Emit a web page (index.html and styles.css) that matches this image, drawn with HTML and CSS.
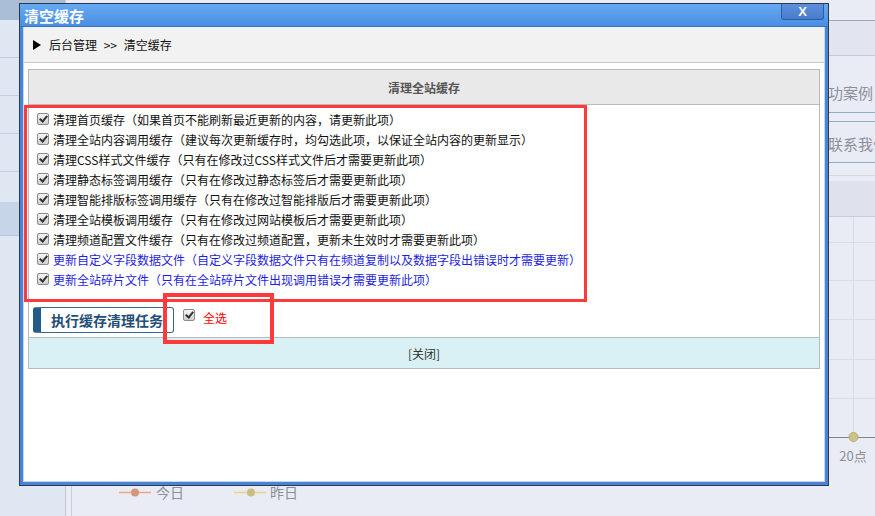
FILE: index.html
```html
<!DOCTYPE html>
<html lang="zh-CN">
<head>
    <meta charset="UTF-8">
    <title>清空缓存</title>
    <link rel="stylesheet" href="styles.css">
</head>
<body>
    <div class="page">
        <aside class="side">
            <div class="side-top"></div>
            <ul class="side-menu">
                <li></li>
                <li></li>
                <li></li>
                <li></li>
                <li class="gap"></li>
                <li class="on"></li>
            </ul>
        </aside>
        <main class="main">
            <div class="main-top"></div>
            <div class="main-band"></div>
            <div class="quick">成功案例</div>
            <div class="quick quick-alt">联系我们</div>
            <div class="chart-wrap">
                <svg class="chart" width="809" height="335" viewBox="0 0 809 335">
                    <rect x="0" y="0" width="809" height="35" fill="#dfe2ec"/>
                    <line x1="0" y1="35.5" x2="809" y2="35.5" stroke="#c8ccd8"/>
                    <line x1="5.5" y1="36" x2="5.5" y2="335" stroke="#c9cdd8"/>
                    <line x1="6" y1="61.5" x2="809" y2="61.5" stroke="#d9dce6"/>
                    <line x1="6" y1="99.5" x2="809" y2="99.5" stroke="#d9dce6"/>
                    <line x1="6" y1="138.5" x2="809" y2="138.5" stroke="#d9dce6"/>
                    <line x1="6" y1="178.5" x2="809" y2="178.5" stroke="#d9dce6"/>
                    <line x1="6" y1="217.5" x2="809" y2="217.5" stroke="#d9dce6"/>
                    <line x1="787.5" y1="36" x2="787.5" y2="262" stroke="#d9dce6"/>
                    <line x1="6" y1="256.5" x2="809" y2="256.5" stroke="#7c8492"/>
                    <circle cx="787.5" cy="256" r="4.5" fill="#cdc38a" stroke="#b9ae72"/>
                    <text x="787" y="280" text-anchor="middle" class="chart-label">20点</text>
                    <line x1="53" y1="311.5" x2="85" y2="311.5" stroke="#f2a584" stroke-width="1.5"/>
                    <circle cx="69" cy="311.5" r="4" fill="#d3967c"/>
                    <text x="90" y="316.5" class="chart-legend">今日</text>
                    <line x1="168" y1="311.5" x2="200" y2="311.5" stroke="#ead77a" stroke-width="1.5"/>
                    <circle cx="185" cy="311.5" r="4" fill="#c8c080"/>
                    <text x="204" y="316.5" class="chart-legend">昨日</text>
                </svg>
            </div>
        </main>
    </div>

    <div class="dialog">
        <div class="dialog-title">
            <span class="dialog-name">清空缓存</span>
            <a class="dialog-close" href="#">X</a>
        </div>
        <div class="dialog-body">
            <div class="crumb">
                <span class="crumb-arrow"></span>
                <span class="crumb-text">后台管理 &gt;&gt; 清空缓存</span>
            </div>
            <table class="grid">
                <tr>
                    <th>清理全站缓存</th>
                </tr>
                <tr>
                    <td class="grid-body">
                        <ul class="cache-list">
                            <li><input type="checkbox" checked>清理首页缓存（如果首页不能刷新最近更新的内容，请更新此项）</li>
                            <li><input type="checkbox" checked>清理全站内容调用缓存（建议每次更新缓存时，均勾选此项，以保证全站内容的更新显示）</li>
                            <li><input type="checkbox" checked>清理CSS样式文件缓存（只有在修改过CSS样式文件后才需要更新此项）</li>
                            <li><input type="checkbox" checked>清理静态标签调用缓存（只有在修改过静态标签后才需要更新此项）</li>
                            <li><input type="checkbox" checked>清理智能排版标签调用缓存（只有在修改过智能排版后才需要更新此项）</li>
                            <li><input type="checkbox" checked>清理全站模板调用缓存（只有在修改过网站模板后才需要更新此项）</li>
                            <li><input type="checkbox" checked>清理频道配置文件缓存（只有在修改过频道配置，更新未生效时才需要更新此项）</li>
                            <li class="blue"><input type="checkbox" checked>更新自定义字段数据文件（自定义字段数据文件只有在频道复制以及数据字段出错误时才需要更新）</li>
                            <li class="blue"><input type="checkbox" checked>更新全站碎片文件（只有在全站碎片文件出现调用错误才需要更新此项）</li>
                        </ul>
                        <div class="actions">
                            <button type="button" class="run-btn">执行缓存清理任务</button>
                            <label class="check-all"><input type="checkbox" checked>全选</label>
                        </div>
                    </td>
                </tr>
                <tr>
                    <td class="grid-foot">[关闭]</td>
                </tr>
            </table>
        </div>
    </div>

    <div class="mark mark-list"></div>
    <div class="mark mark-all"></div>
</body>
</html>
```

FILE: styles.css
```css
body {
    margin: 0;
    padding: 0;
    width: 875px;
    height: 516px;
    overflow: hidden;
    font-family: "Microsoft YaHei", "Noto Sans CJK SC", sans-serif;
    font-size: 12px;
    background-color: #e9ecf5;
}
.page {
    display: flex;
    height: 516px;
}
.side {
    width: 65px;
    border-right: 1px solid #c2cad8;
    background-color: #dfe7f2;
    flex-shrink: 0;
}
.side-top {
    height: 20px;
    background-color: #aabdd6;
}
.side-menu {
    margin: 0;
    padding: 0;
    list-style: none;
}
.side-menu li {
    height: 37px;
    border-bottom: 1px solid #c6d0de;
}
.side-menu li.gap {
    height: 30px;
    border-bottom: none;
}
.side-menu li.on {
    height: 33px;
    background-color: #c7d5e8;
    border-bottom: 1px solid #b9c7da;
}
.main {
    flex: 1;
    min-width: 0;
    display: flex;
    flex-direction: column;
    overflow: hidden;
}
.main-top {
    height: 20px;
    border-bottom: 1px solid #9ea7b8;
}
.main-band {
    height: 34px;
    background-color: #e2e5ef;
    border-bottom: 1px solid #c5cad8;
}
.quick {
    height: 56px;
    padding-left: 747px;
    line-height: 74px;
    font-size: 15px;
    color: #8c8f98;
    border-bottom: 1px solid #93abca;
    white-space: nowrap;
    overflow: hidden;
}
.quick-alt {
    height: 40px;
    line-height: 44px;
    padding-left: 762px;
    margin-top: 8px;
    border-top: 1px solid #93abca;
    margin-bottom: 12px;
}
.chart-wrap {
    border-top: 1px solid #d4d8e2;
    padding-top: 5px;
}
.chart {
    display: block;
}
.chart-label, .chart-legend {
    font-family: "Microsoft YaHei", "Noto Sans CJK SC", sans-serif;
    font-size: 13px;
    fill: #8a8f9a;
}
.chart-legend {
    font-size: 14px;
}

/* dialog */
.dialog {
    position: absolute;
    left: 19px;
    top: 3px;
    width: 808px;
    height: 481px;
    border: 1px solid #2e3a48;
    background-color: #4884d7;
    display: flex;
    flex-direction: column;
}
.dialog-title {
    height: 22px;
    border-bottom: 1px solid #3a72c2;
    background: linear-gradient(#66a9f3, #4a8ee2);
    display: flex;
    justify-content: space-between;
    align-items: flex-start;
    padding: 0 4px;
}
.dialog-name {
    color: #fff;
    font-size: 15px;
    font-weight: bold;
    line-height: 23px;
}
.dialog-close {
    width: 41px;
    height: 15px;
    line-height: 15px;
    text-align: center;
    color: #fff;
    font-family: "Liberation Sans", Arial, sans-serif;
    font-size: 13px;
    font-weight: bold;
    text-decoration: none;
    background: linear-gradient(#5b8fdc, #4a7ccc);
    border: 1px solid #2d5ca6;
    border-top: none;
    border-radius: 0 0 3px 3px;
}
.dialog-body {
    flex: 1;
    margin: 0 3px 3px;
    background-color: #fff;
    border: 1px solid #c6d9f3;
    border-top: none;
}
.crumb {
    height: 35px;
    background-color: #f2f2f2;
    border-bottom: 1px solid #c9c9c9;
    padding-left: 9px;
    display: flex;
    align-items: center;
    color: #111;
}
.crumb-arrow {
    width: 0;
    height: 0;
    border-left: 8px solid #000;
    border-top: 5.5px solid transparent;
    border-bottom: 5.5px solid transparent;
    margin-right: 8px;
    margin-top: 1px;
}
.crumb-text {
    word-spacing: 4px;
}
.grid {
    width: 792px;
    margin: 6px 4px 0;
    border-collapse: collapse;
    border: 1px solid #b5bdc0;
}
.grid th {
    height: 34px;
    padding: 0;
    background-color: #e9e9e9;
    border-bottom: 1px solid #b5bdc0;
    color: #555;
    font-size: 12px;
    font-weight: bold;
}
.grid-body {
    padding: 0 4px;
    vertical-align: top;
}
.cache-list {
    margin: 0;
    padding: 4px 0 0;
    list-style: none;
}
.cache-list li {
    height: 20px;
    display: flex;
    align-items: center;
    padding-left: 4px;
    color: #111;
    white-space: nowrap;
}
.cache-list li.blue {
    color: #1e1ee0;
}
input[type="checkbox"] {
    appearance: none;
    -webkit-appearance: none;
    position: relative;
    width: 12px;
    height: 12px;
    margin: 0 4px 0 0;
    border: 1px solid #8c8c8c;
    border-radius: 2px;
    background: linear-gradient(#f6f6f6, #cfcfcf);
    box-sizing: border-box;
    flex-shrink: 0;
}
input[type="checkbox"]:checked::after {
    content: "";
    position: absolute;
    left: 3px;
    top: 0;
    width: 3px;
    height: 6px;
    border-right: 2px solid #333;
    border-bottom: 2px solid #333;
    transform: rotate(40deg);
}
.actions {
    display: flex;
    align-items: center;
    height: 26px;
    margin: 18px 0 4px;
}
.run-btn {
    width: 141px;
    height: 26px;
    padding: 0;
    box-sizing: border-box;
    background-color: #fff;
    border: 1px solid #35688f;
    border-left: 8px solid #245a86;
    border-radius: 3px;
    color: #1f4e76;
    font-family: "SimSun", "Noto Sans CJK SC", sans-serif;
    font-size: 14px;
    font-weight: bold;
    cursor: pointer;
}
.check-all {
    display: flex;
    align-items: center;
    margin-left: 9px;
    margin-top: -6px;
    color: #f00;
}
.check-all input {
    margin-right: 8px;
    margin-top: -4px;
}
.grid-foot {
    height: 30px;
    padding: 0;
    text-align: center;
    background-color: #d9f0f5;
    border-top: 1px solid #b5bdc0;
    color: #333;
}

/* red annotation boxes */
.mark {
    position: absolute;
    border: 3px solid #ff3a3a;
    box-sizing: border-box;
}
.mark-list {
    left: 24px;
    top: 105px;
    width: 563px;
    height: 197px;
}
.mark-all {
    left: 163px;
    top: 293px;
    width: 111px;
    height: 51px;
    border-width: 4px;
}
```
